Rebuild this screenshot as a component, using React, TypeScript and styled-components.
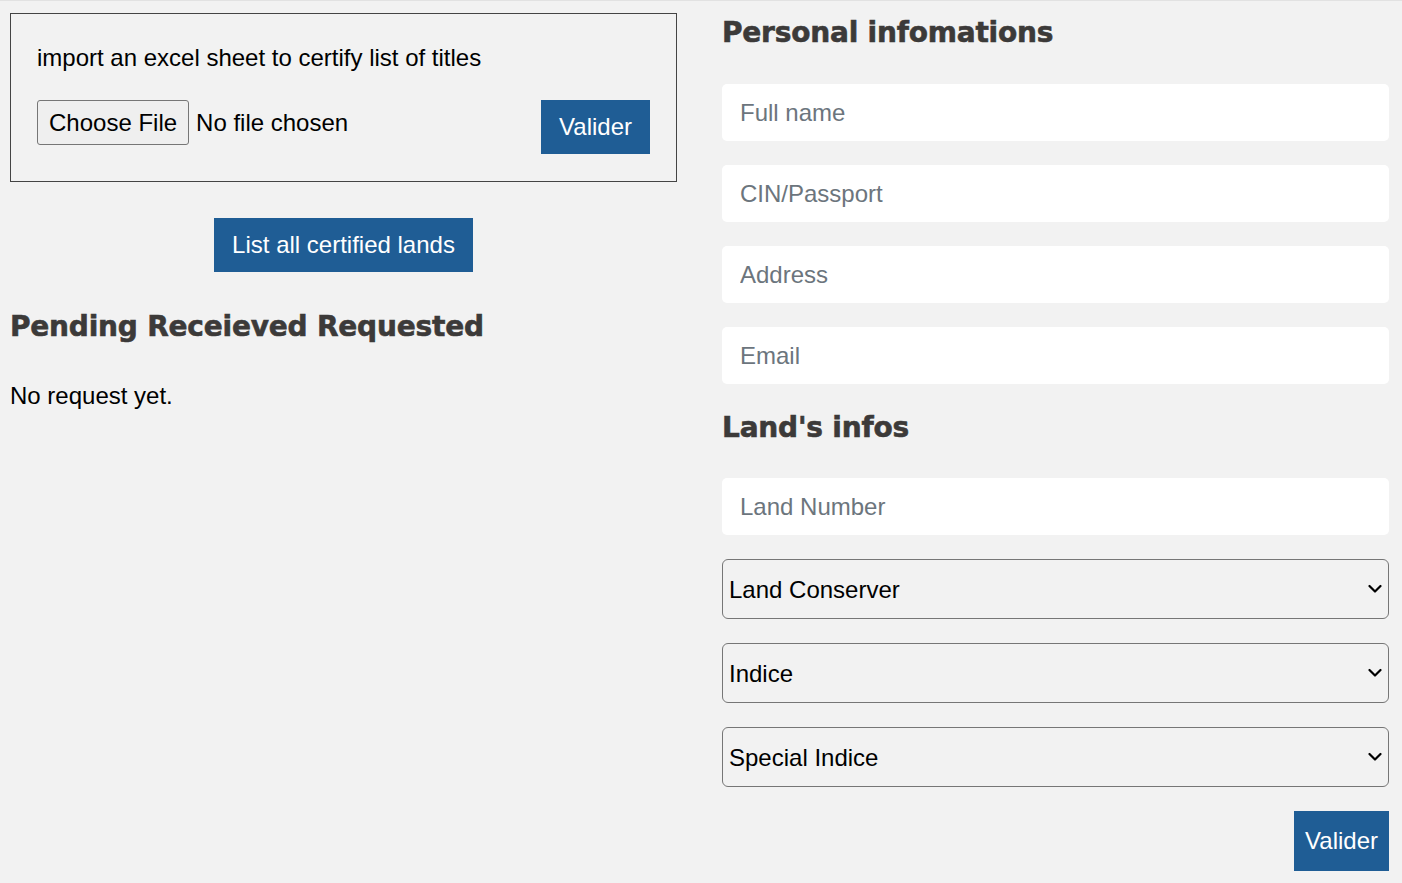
import React from 'react';
import styled, { createGlobalStyle } from 'styled-components';

const GlobalStyle = createGlobalStyle`
  html, body {
    margin: 0;
    padding: 0;
    background: #f2f2f2;
  }
  body {
    font-family: "Liberation Sans", Arial, sans-serif;
    color: #000;
  }
`;

const Page = styled.div`
  display: grid;
  grid-template-columns: 667px 667px;
  column-gap: 45px;
  padding: 0 13px 12px 10px;
  border-top: 1px solid #e2e2e2;
  min-height: 882px;
  box-sizing: border-box;
`;

const LeftColumn = styled.section`
  display: flex;
  flex-direction: column;
  padding-top: 12px;
`;

const RightColumn = styled.section`
  display: flex;
  flex-direction: column;
`;

const ImportBox = styled.div`
  border: 1px solid #444;
  padding: 30px 26px 27px;
`;

const ImportText = styled.p`
  margin: 0 0 28px;
  font-size: 24px;
  line-height: 28px;
`;

const FileRow = styled.div`
  display: flex;
  align-items: flex-start;
  justify-content: space-between;
`;

const FilePicker = styled.label`
  display: flex;
  align-items: center;
  gap: 7px;
  height: 45px;
  font-size: 24px;
  cursor: pointer;
  input {
    display: none;
  }
`;

const FileButton = styled.span`
  display: inline-flex;
  align-items: center;
  height: 45px;
  box-sizing: border-box;
  padding: 0 11px;
  background: #efefef;
  border: 1px solid #767676;
  border-radius: 3px;
  font-size: 24px;
`;

const PrimaryButton = styled.button<{ $height?: number; $pad?: number }>`
  height: ${(p) => p.$height ?? 54}px;
  padding: 0 ${(p) => p.$pad ?? 18}px;
  border: none;
  background: #1f5d95;
  color: #fff;
  font-family: "Liberation Sans", Arial, sans-serif;
  font-size: 24px;
  cursor: pointer;
  &:hover {
    background: #184d7c;
  }
`;

const Center = styled.div`
  display: flex;
  justify-content: center;
  margin-top: 36px;
`;

const Heading = styled.h2<{ $top: number; $bottom: number }>`
  margin: ${(p) => p.$top}px 0 ${(p) => p.$bottom}px;
  font-family: "DejaVu Sans", sans-serif;
  font-weight: 700;
  font-size: 28px;
  line-height: 34px;
  color: #3c3a39;
  letter-spacing: -0.2px;
  -webkit-text-stroke: 0.6px #3c3a39;
`;

const EmptyText = styled.p`
  margin: 0;
  font-size: 24px;
  line-height: 28px;
`;

const Fields = styled.div`
  display: flex;
  flex-direction: column;
  gap: 24px;
`;

const TextInput = styled.input`
  height: 57px;
  box-sizing: border-box;
  border: none;
  border-radius: 5px;
  background: #fff;
  padding: 0 18px;
  font-family: "Liberation Sans", Arial, sans-serif;
  font-size: 24px;
  color: #222;
  outline: none;
  &::placeholder {
    color: #6c757d;
  }
`;

const SelectWrap = styled.div`
  position: relative;
  display: flex;
  flex-direction: column;
`;

const Select = styled.select`
  appearance: none;
  height: 60px;
  box-sizing: border-box;
  border: 1px solid #767676;
  border-radius: 6px;
  background: #f2f2f2;
  padding: 0 40px 0 6px;
  font-family: "Liberation Sans", Arial, sans-serif;
  font-size: 24px;
  color: #000;
`;

const Chevron = styled.svg`
  position: absolute;
  right: 7px;
  top: 50%;
  transform: translateY(-50%);
  pointer-events: none;
`;

const SubmitRow = styled.div`
  display: flex;
  justify-content: flex-end;
  margin-top: 24px;
`;

const SelectField: React.FC<{ label: string }> = ({ label }) => (
  <SelectWrap>
    <Select defaultValue="">
      <option value="">{label}</option>
    </Select>
    <Chevron width="14" height="9" viewBox="0 0 14 9" fill="none">
      <path d="M1.5 1.5 L7 7 L12.5 1.5" stroke="#000" strokeWidth="2.2" strokeLinecap="round" strokeLinejoin="round" />
    </Chevron>
  </SelectWrap>
);

export default function App() {
  return (
    <>
      <GlobalStyle />
      <Page>
        <LeftColumn>
          <ImportBox>
            <ImportText>import an excel sheet to certify list of titles</ImportText>
            <FileRow>
              <FilePicker>
                <input type="file" />
                <FileButton>Choose File</FileButton>
                No file chosen
              </FilePicker>
              <PrimaryButton>Valider</PrimaryButton>
            </FileRow>
          </ImportBox>
          <Center>
            <PrimaryButton>List all certified lands</PrimaryButton>
          </Center>
          <Heading $top={38} $bottom={38}>Pending Receieved Requested</Heading>
          <EmptyText>No request yet.</EmptyText>
        </LeftColumn>
        <RightColumn>
          <Heading $top={15} $bottom={34}>Personal infomations</Heading>
          <Fields>
            <TextInput placeholder="Full name" />
            <TextInput placeholder="CIN/Passport" />
            <TextInput placeholder="Address" />
            <TextInput placeholder="Email" />
          </Fields>
          <Heading $top={27} $bottom={33}>Land's infos</Heading>
          <Fields>
            <TextInput placeholder="Land Number" />
            <SelectField label="Land Conserver" />
            <SelectField label="Indice" />
            <SelectField label="Special Indice" />
          </Fields>
          <SubmitRow>
            <PrimaryButton $height={60} $pad={11}>Valider</PrimaryButton>
          </SubmitRow>
        </RightColumn>
      </Page>
    </>
  );
}
